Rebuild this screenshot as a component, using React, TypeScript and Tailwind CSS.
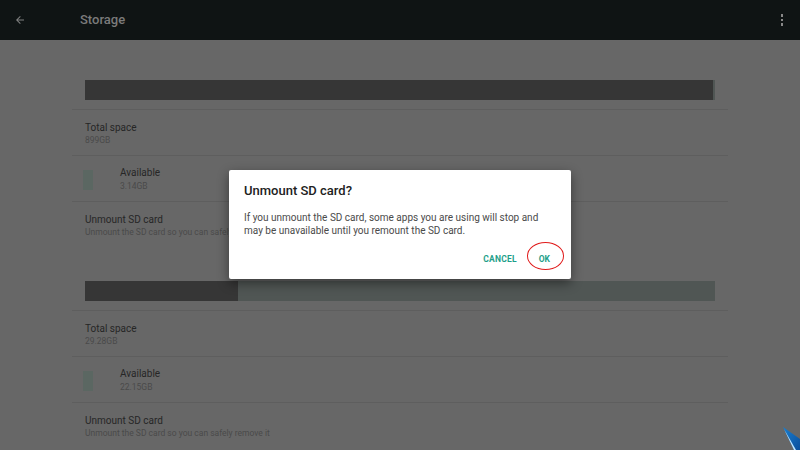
import React from "react";

function Row({ title, sub, swatch }: { title: string; sub: string; swatch?: boolean }) {
  return (
    <div className="border-t border-[#5e5e5e] h-[46px] flex items-center">
      {swatch ? (
        <div className="flex items-center pl-[11px] pt-[2px]">
          <div className="w-[10px] h-[20px] bg-[#5b6762]" />
          <div className="ml-[27px] flex flex-col">
            <span className="text-[10px] leading-[13.5px] text-[#262626]">{title}</span>
            <span className="text-[8.5px] leading-[13.5px] text-[#4a4a4a]">{sub}</span>
          </div>
        </div>
      ) : (
        <div className="pl-[13px] pt-[3px] flex flex-col">
          <span className="text-[10px] leading-[13.5px] text-[#262626]">{title}</span>
          <span className="text-[8.5px] leading-[13.5px] text-[#4a4a4a]">{sub}</span>
        </div>
      )}
    </div>
  );
}

function Section({ used, total, avail }: { used: number; total: string; avail: string }) {
  return (
    <div className="flex flex-col">
      <div className="ml-[13px] w-[630px] h-[20px] flex bg-[#505654]">
        <div className="h-full bg-[#363636]" style={{ width: `${used}%` }} />
      </div>
      <div className="h-[9px]" />
      <Row title="Total space" sub={total} />
      <Row title="Available" sub={avail} swatch />
      <Row title="Unmount SD card" sub="Unmount the SD card so you can safely remove it" />
    </div>
  );
}

export default function App() {
  return (
    <div
      className="relative w-[800px] h-[450px] overflow-hidden bg-[#676767]"
      style={{ fontFamily: "Roboto, 'Noto Sans', sans-serif" }}
    >
      <div className="h-[40px] bg-[#0f1414] flex items-center">
        <svg width="12" height="12" viewBox="0 0 24 24" className="ml-[14px]">
          <path d="M20 11H7.83l5.59-5.59L12 4l-8 8 8 8 1.41-1.41L7.83 13H20v-2z" fill="#808080" />
        </svg>
        <span className="ml-[54px] text-[13px] font-medium text-[#7b7b7b]">Storage</span>
        <div className="ml-auto mr-[17px] flex flex-col gap-[2px]">
          <div className="w-[2.5px] h-[2.5px] bg-[#888]" />
          <div className="w-[2.5px] h-[2.5px] bg-[#888]" />
          <div className="w-[2.5px] h-[2.5px] bg-[#888]" />
        </div>
      </div>

      <div className="ml-[72px] w-[656px] pt-[40px] flex flex-col">
        <Section used={99.7} total="899GB" avail="3.14GB" />
        <div className="h-[34px]" />
        <Section used={24.3} total="29.28GB" avail="22.15GB" />
      </div>

      {/* dialog */}
      <div className="absolute left-[229px] top-[170px] w-[342px] h-[109px] bg-white rounded-[2px] shadow-[0_4px_12px_rgba(0,0,0,0.45)] flex flex-col">
        <div className="pl-[15px] pt-[13px] text-[13px] font-medium text-[#212121] leading-[16px]">
          Unmount SD card?
        </div>
        <div className="pl-[15px] pr-[14px] mt-[12px] text-[10px] leading-[13px] text-[#4a4a4a]">
          If you unmount the SD card, some apps you are using will stop and may be unavailable until you remount the SD card.
        </div>
        <div className="flex justify-end items-center mt-[16px] pr-[21px]">
          <span className="text-[8.5px] font-bold text-[#1f9f8a] tracking-[0.2px]">CANCEL</span>
          <span className="relative ml-[22px] text-[8.5px] font-bold text-[#1f9f8a]">
            OK
            <span className="absolute left-[-12px] top-[-11px] w-[37px] h-[28px] rounded-[50%] border-[1.5px] border-[#e01b1b]" />
          </span>
        </div>
      </div>

      <svg className="absolute right-0 bottom-0" width="18" height="25" viewBox="0 0 18 25">
        <defs>
          <linearGradient id="g" x1="0" y1="0" x2="1" y2="1">
            <stop offset="0" stopColor="#1a7fd0" />
            <stop offset="1" stopColor="#0b4f9c" />
          </linearGradient>
        </defs>
        <polygon points="1,2 18,14 18,25 12,25" fill="url(#g)" />
        <polygon points="2,4 12,25 14,25" fill="#bfe6ff" />
      </svg>
    </div>
  );
}
